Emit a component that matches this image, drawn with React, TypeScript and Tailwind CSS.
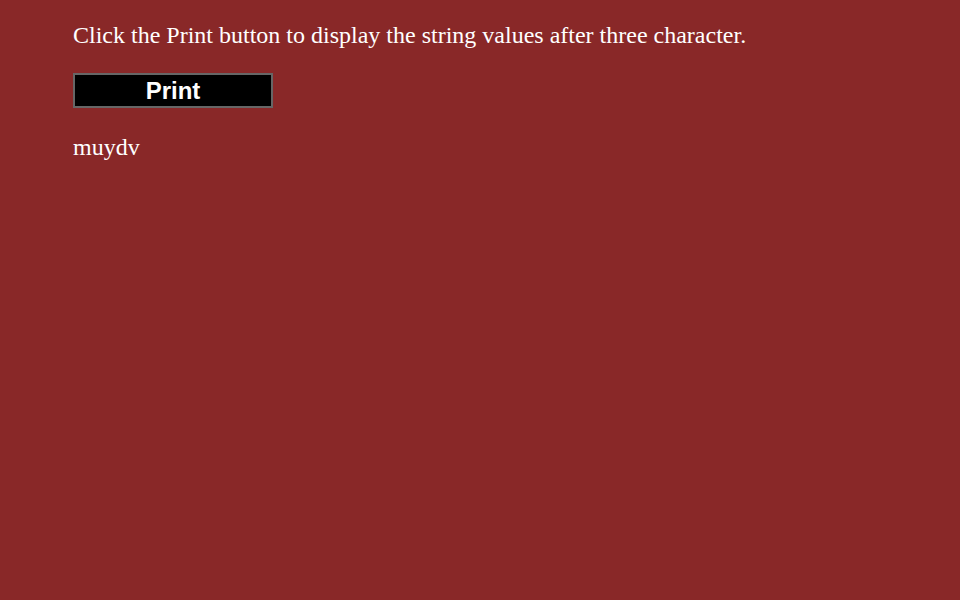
import React, { useState } from 'react';

const App: React.FC = () => {
    const [output] = useState('muydv');

    return (
        <div className="min-h-[600px] w-full bg-[#892828] font-['Liberation_Serif',serif] text-white">
            <div className="px-[73px] pt-[19px]">
                <p className="text-[24px] leading-[32px]">
                    Click the Print button to display the string values after three character.
                </p>
                <button className="mt-[22px] block h-[35px] w-[200px] border-2 border-[#666] bg-black font-['Liberation_Sans',sans-serif] text-[24px] font-bold leading-none text-white">
                    Print
                </button>
                <p className="mt-[23px] text-[24px] leading-[32px]">{output}</p>
            </div>
        </div>
    );
};

export default App;
